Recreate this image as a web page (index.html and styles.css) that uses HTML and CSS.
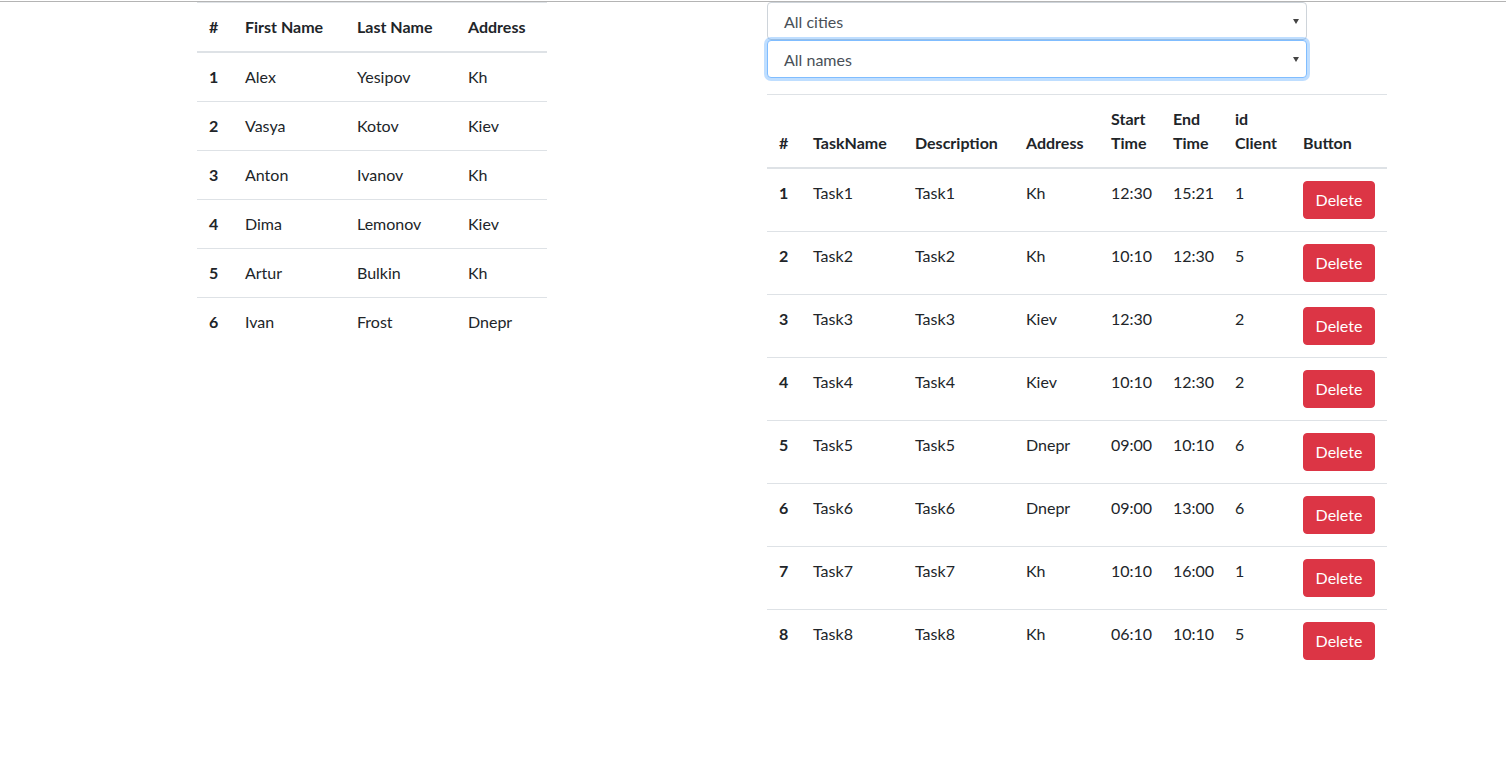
FILE: index.html
```html
<!DOCTYPE html>
<html lang="en">
<head>
<meta charset="utf-8">
<title>Tasks</title>
<link rel="stylesheet" href="styles.css">
</head>
<body>
<div class="topline"></div>
<div class="layout">
  <div class="col-left">
    <table class="table clients">
      <colgroup><col class="c1"><col class="c2"><col class="c3"><col class="c4"></colgroup>
      <thead>
        <tr><th>#</th><th>First Name</th><th>Last Name</th><th>Address</th></tr>
      </thead>
      <tbody>
        <tr><th>1</th><td>Alex</td><td>Yesipov</td><td>Kh</td></tr>
        <tr><th>2</th><td>Vasya</td><td>Kotov</td><td>Kiev</td></tr>
        <tr><th>3</th><td>Anton</td><td>Ivanov</td><td>Kh</td></tr>
        <tr><th>4</th><td>Dima</td><td>Lemonov</td><td>Kiev</td></tr>
        <tr><th>5</th><td>Artur</td><td>Bulkin</td><td>Kh</td></tr>
        <tr class="last"><th>6</th><td>Ivan</td><td>Frost</td><td>Dnepr</td></tr>
      </tbody>
    </table>
  </div>
  <div class="col-right">
    <div class="select"><span>All cities</span><span class="arrow"></span></div>
    <div class="select focus"><span>All names</span><span class="arrow"></span></div>
    <table class="table tasks">
      <colgroup><col class="t1"><col class="t2"><col class="t3"><col class="t4"><col class="t5"><col class="t6"><col class="t7"><col class="t8"></colgroup>
      <thead>
        <tr><th>#</th><th>TaskName</th><th>Description</th><th>Address</th><th>Start Time</th><th>End Time</th><th>id Client</th><th>Button</th></tr>
      </thead>
      <tbody>
        <tr><th>1</th><td>Task1</td><td>Task1</td><td>Kh</td><td>12:30</td><td>15:21</td><td>1</td><td><button class="btn">Delete</button></td></tr>
        <tr><th>2</th><td>Task2</td><td>Task2</td><td>Kh</td><td>10:10</td><td>12:30</td><td>5</td><td><button class="btn">Delete</button></td></tr>
        <tr><th>3</th><td>Task3</td><td>Task3</td><td>Kiev</td><td>12:30</td><td></td><td>2</td><td><button class="btn">Delete</button></td></tr>
        <tr><th>4</th><td>Task4</td><td>Task4</td><td>Kiev</td><td>10:10</td><td>12:30</td><td>2</td><td><button class="btn">Delete</button></td></tr>
        <tr><th>5</th><td>Task5</td><td>Task5</td><td>Dnepr</td><td>09:00</td><td>10:10</td><td>6</td><td><button class="btn">Delete</button></td></tr>
        <tr><th>6</th><td>Task6</td><td>Task6</td><td>Dnepr</td><td>09:00</td><td>13:00</td><td>6</td><td><button class="btn">Delete</button></td></tr>
        <tr><th>7</th><td>Task7</td><td>Task7</td><td>Kh</td><td>10:10</td><td>16:00</td><td>1</td><td><button class="btn">Delete</button></td></tr>
        <tr class="last"><th>8</th><td>Task8</td><td>Task8</td><td>Kh</td><td>06:10</td><td>10:10</td><td>5</td><td><button class="btn">Delete</button></td></tr>
      </tbody>
    </table>
  </div>
</div>
</body>
</html>
```

FILE: styles.css
```css
html, body {
  margin: 0;
  padding: 0;
  background: #fff;
}
body {
  font-family: "Segoe UI", Lato, "Liberation Sans", sans-serif;
  font-size: 16px;
  line-height: 24px;
  color: #212529;
}
.topline {
  margin-top: 1px;
  height: 1px;
  background: #b4b4b4;
}
.layout {
  display: flex;
  align-items: flex-start;
  padding-left: 197px;
  gap: 220px;
}
.col-left {
  width: 350px;
  flex: none;
}
.col-right {
  width: 620px;
  flex: none;
}
.table {
  border-collapse: collapse;
  table-layout: fixed;
  width: 100%;
}
.table th, .table td {
  padding: 12px;
  text-align: left;
  border-top: 1px solid #dee2e6;
  vertical-align: top;
  white-space: normal;
}
.table th { font-weight: 700; }
.table thead th {
  vertical-align: bottom;
  border-bottom: 2px solid #dee2e6;
}
.table tr.last th, .table tr.last td { border-bottom: none; }
.clients .c1 { width: 36px; }
.clients .c2 { width: 112px; }
.clients .c3 { width: 111px; }
.clients .c4 { width: 91px; }
.tasks { width: 620px; margin-top: 16px; }
.tasks .t1 { width: 34px; }
.tasks .t2 { width: 102px; }
.tasks .t3 { width: 111px; }
.tasks .t4 { width: 85px; }
.tasks .t5 { width: 62px; }
.tasks .t6 { width: 62px; }
.tasks .t7 { width: 68px; }
.tasks .t8 { width: 96px; }
.select {
  box-sizing: border-box;
  width: 540px;
  height: 38px;
  border: 1px solid #ced4da;
  border-radius: 4px;
  padding: 7px 7px 5px 16px;
  color: #495057;
  display: flex;
  align-items: center;
  justify-content: space-between;
  background: #fff;
}
.select.focus {
  border-color: #80bdff;
  box-shadow: 0 0 0 3px rgba(0, 123, 255, 0.25);
}
.arrow {
  width: 0;
  height: 0;
  border-left: 3px solid transparent;
  border-right: 3px solid transparent;
  border-top: 5px solid #444;
  margin-top: -2px;
}
.btn {
  box-sizing: border-box;
  width: 72px;
  height: 38px;
  border: 1px solid #dc3545;
  border-radius: 4px;
  background: #dc3545;
  color: #fff;
  font: inherit;
  line-height: 24px;
  padding: 6px 0;
  text-align: center;
  cursor: pointer;
}
```
